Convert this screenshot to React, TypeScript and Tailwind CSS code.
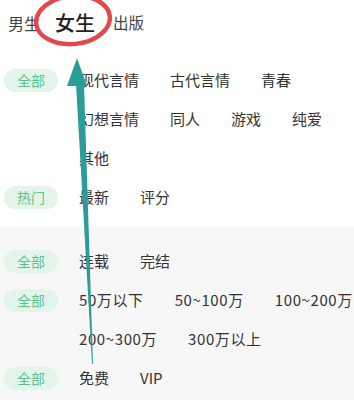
import React from 'react';

type Group = { label: string; rows: string[][] };

const topGroups: Group[] = [
  { label: '全部', rows: [['现代言情', '古代言情', '青春'], ['幻想言情', '同人', '游戏', '纯爱'], ['其他']] },
  { label: '热门', rows: [['最新', '评分']] },
];

const grayGroups: Group[] = [
  { label: '全部', rows: [['连载', '完结']] },
  { label: '全部', rows: [['50万以下', '50~100万', '100~200万'], ['200~300万', '300万以上']] },
  { label: '全部', rows: [['免费', 'VIP']] },
];

const FilterGroup = ({ group }: { group: Group }) => (
  <div className="flex items-start pl-[4px]">
    <div className="flex h-[39px] w-[54px] shrink-0 items-center">
      <span className="flex h-[23px] w-[54px] items-center justify-center rounded-full bg-[#e3f5ea] text-[14px] text-[#5dc38b]">
        {group.label}
      </span>
    </div>
    <div className="ml-[21px] flex flex-col">
      {group.rows.map((row, i) => (
        <div key={i} className="flex h-[39px] items-center gap-x-[31px] whitespace-nowrap">
          {row.map((item) => (
            <span
              key={item}
              className={/\d/.test(item) ? 'text-[15px] tracking-[0.6px] text-[#333]' : 'text-[15px] text-[#333]'}
            >
              {item}
            </span>
          ))}
        </div>
      ))}
    </div>
  </div>
);

export default function App() {
  return (
    <div
      className="relative h-[400px] w-[354px] overflow-hidden bg-white"
      style={{ fontFamily: '"Noto Sans CJK SC", "Noto Sans", sans-serif' }}
    >
      {/* 顶部分类 */}
      <div className="flex h-[46px] items-center pl-[8px]">
        <span className="text-[16px] text-[#444]">男生</span>
        <span className="ml-[15px] text-[20px] font-medium text-[#222]">女生</span>
        <span className="ml-[18px] text-[15.5px] text-[#444]">出版</span>
      </div>

      <div className="pt-[15px]">
        {topGroups.map((g, i) => (
          <FilterGroup key={i} group={g} />
        ))}
      </div>

      <div className="mt-[10px] h-full bg-[#f7f7f7] pt-[15px]">
        {grayGroups.map((g, i) => (
          <FilterGroup key={i} group={g} />
        ))}
      </div>

      {/* 标注 */}
      <svg className="pointer-events-none absolute left-0 top-0" width="354" height="400" viewBox="0 0 354 400">
        <ellipse
          cx="73"
          cy="20"
          rx="37"
          ry="24"
          fill="none"
          stroke="#e3474c"
          strokeWidth="4.5"
          transform="rotate(-6 73 20)"
        />
        <polygon points="77,58 67,86 87,86" fill="#2a9d98" />
        <polygon points="76,84 84,84 93,364 92,364" fill="#2a9d98" />
      </svg>
    </div>
  );
}
